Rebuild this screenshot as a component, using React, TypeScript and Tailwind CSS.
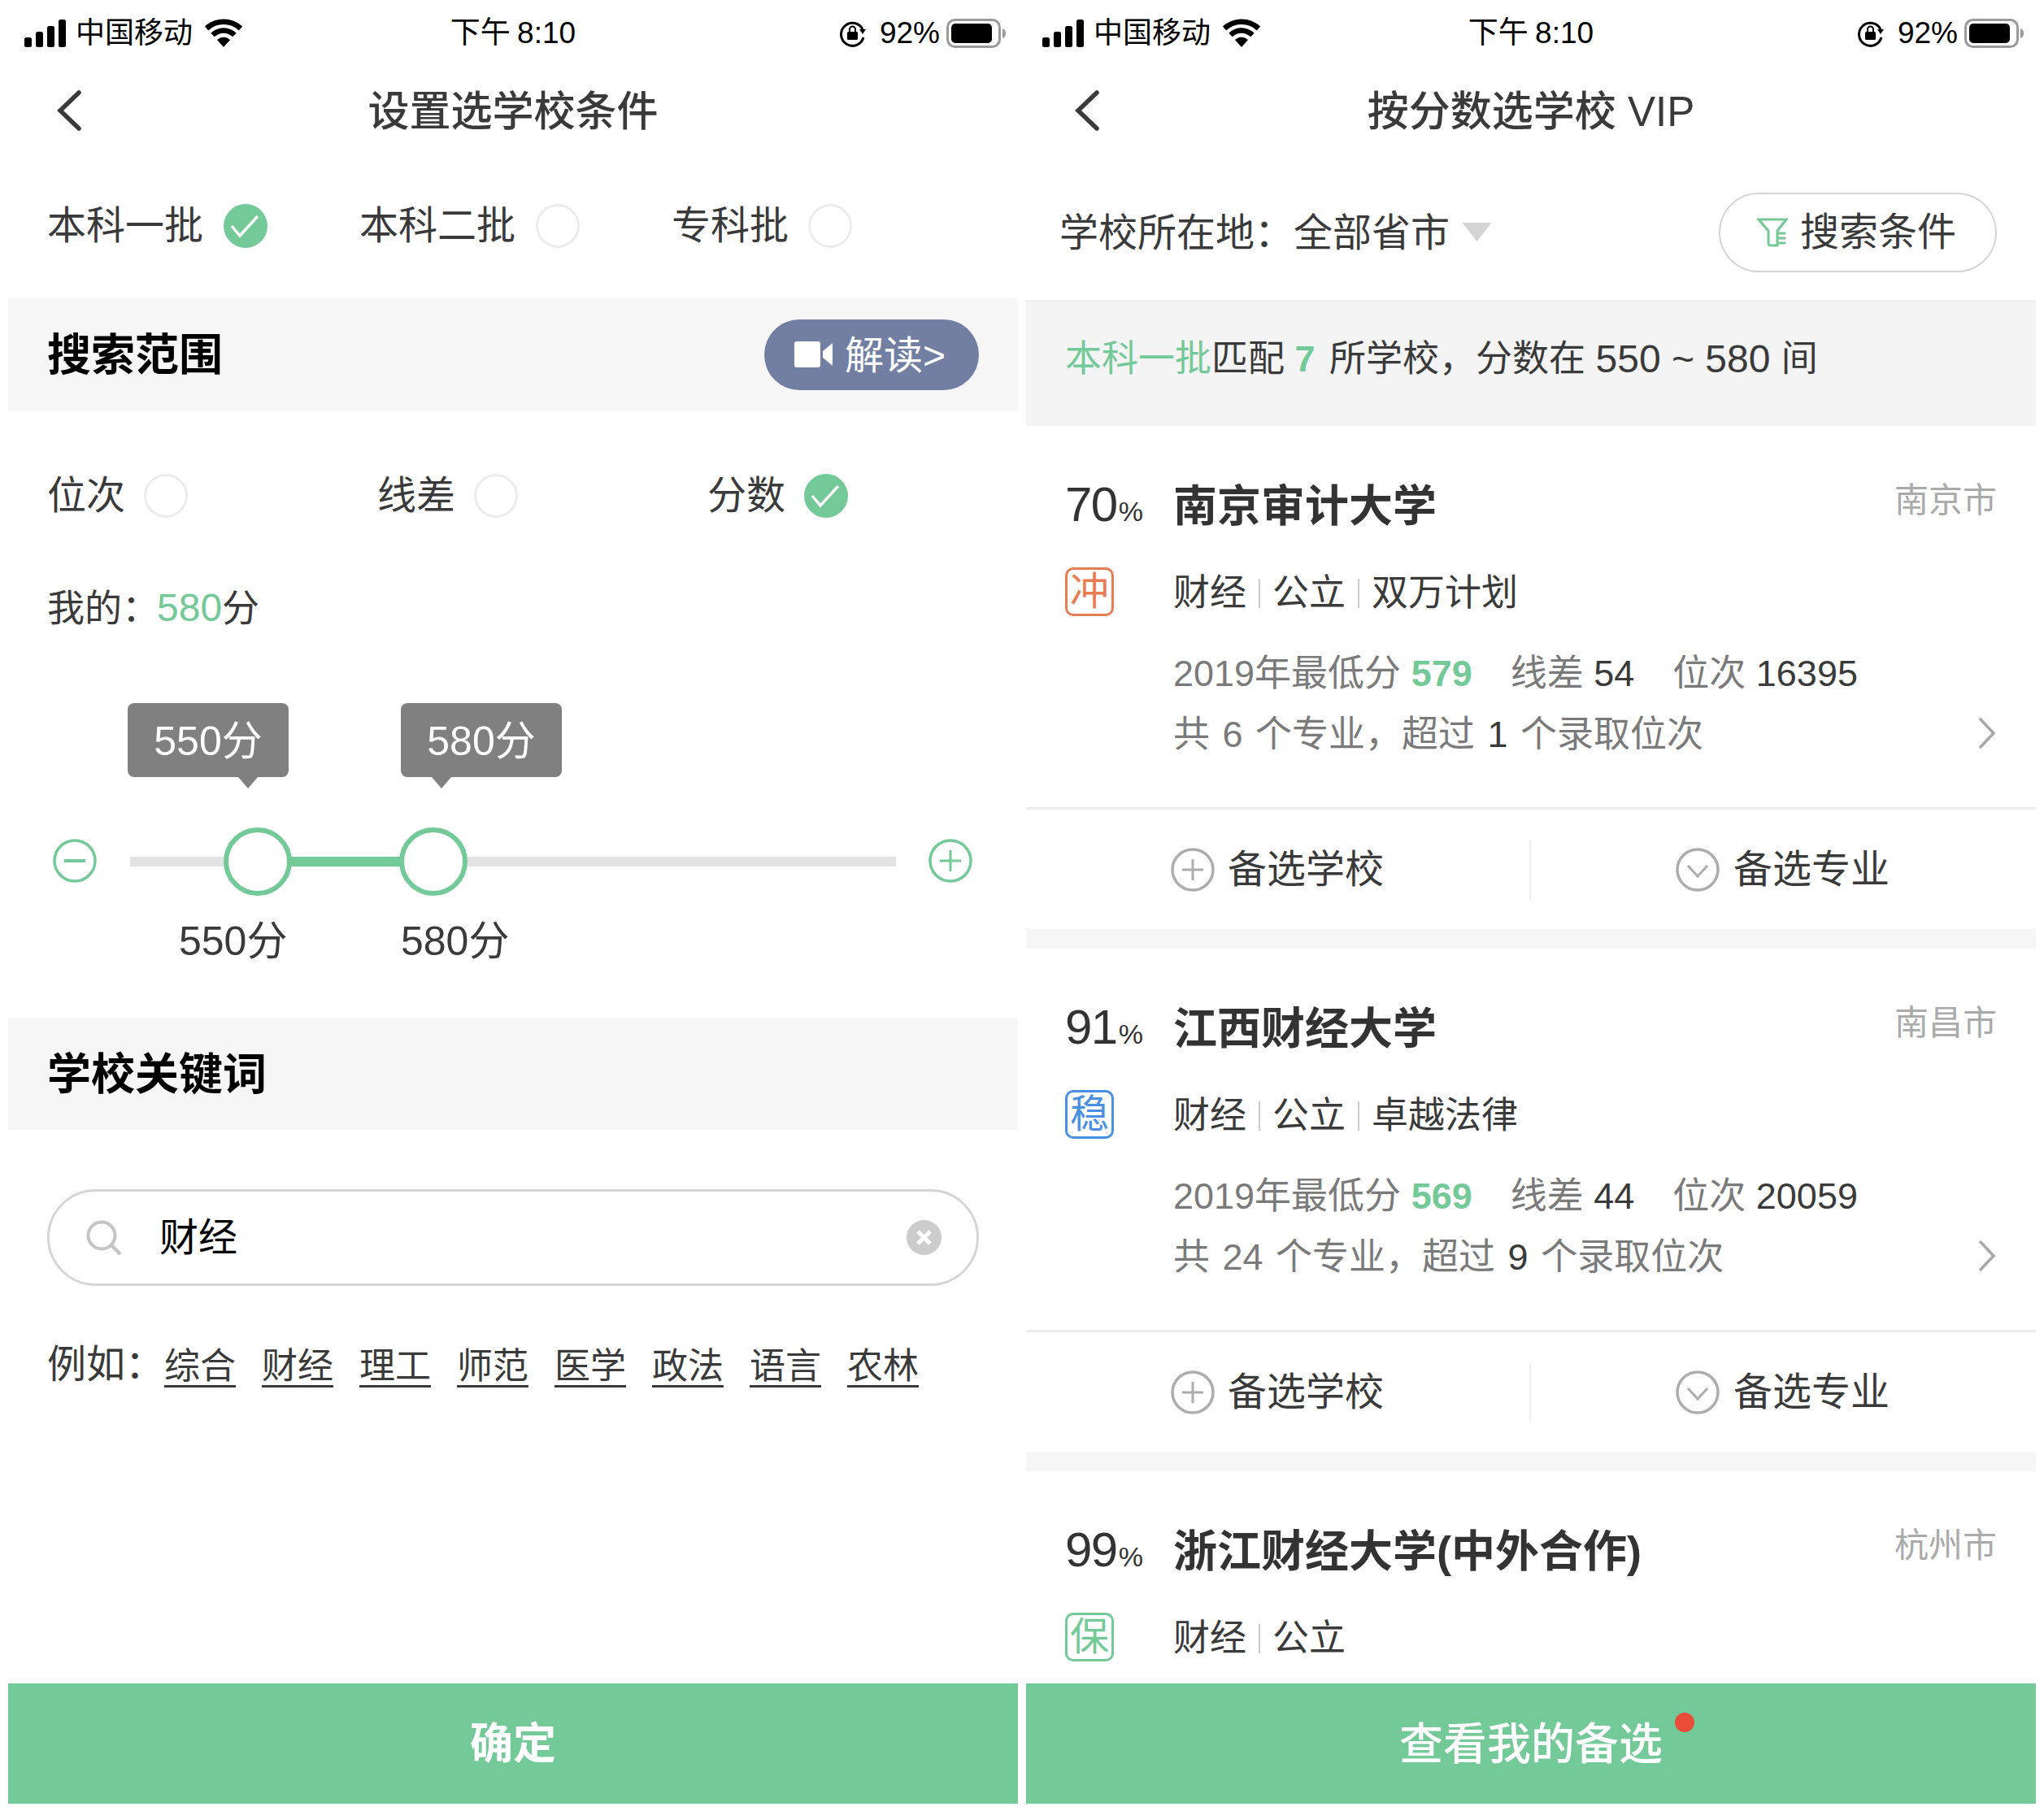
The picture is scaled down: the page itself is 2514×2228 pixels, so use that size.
const CheckMark = ({ on }: { on: boolean }) =>
  on ? (
    <svg width="54" height="54" viewBox="0 0 54 54" className="shrink-0">
      <circle cx="27" cy="27" r="27" fill="#74c998" />
      <path d="M10 27l10 12L42 15" fill="none" stroke="#fff" strokeWidth="3.5" />
    </svg>
  ) : (
    <div className="w-[54px] h-[54px] rounded-full border-[3px] border-[#ececec] shrink-0" />
  );

const StatusBar = () => (
  <div className="h-[80px] pt-[1px] grid grid-cols-[1fr_auto_1fr] items-center text-black text-[36px] leading-none">
    <div className="flex items-center pl-[20px]">
      <svg width="52" height="34" viewBox="0 0 52 34">
        <rect x="0" y="22" width="9" height="12" rx="2.5" fill="#000" />
        <rect x="14" y="15" width="9" height="19" rx="2.5" fill="#000" />
        <rect x="28" y="8" width="9" height="26" rx="2.5" fill="#000" />
        <rect x="42" y="0" width="9" height="34" rx="2.5" fill="#000" />
      </svg>
      <span className="ml-[11px]">中国移动</span>
      <svg width="48" height="36" viewBox="0 0 48 36" className="ml-[14px]">
        <path d="M3 12C15 1 33 1 45 12" fill="none" stroke="#000" strokeWidth="6.5" />
        <path d="M10.5 20C18.5 12.5 29.5 12.5 37.5 20" fill="none" stroke="#000" strokeWidth="6.5" />
        <path d="M16 26C21 21.5 27 21.5 32 26L24 35Z" fill="#000" />
      </svg>
    </div>
    <div className="text-[37px] [word-spacing:-2px]">下午 8:10</div>
    <div className="flex items-center justify-end pr-[14px]">
      <svg width="34" height="34" viewBox="0 0 34 34">
        <path d="M29 12A14 14 0 1 0 30 22" fill="none" stroke="#000" strokeWidth="3" />
        <path d="M25 12h8l-4 6Z" fill="#000" />
        <rect x="10" y="15" width="13" height="10" rx="1.5" fill="#000" />
        <path d="M13 15v-3a3.5 3.5 0 0 1 7 0v3" fill="none" stroke="#000" strokeWidth="2" />
      </svg>
      <span className="ml-[16px] text-[37px]">92%</span>
      <svg width="74" height="36" viewBox="0 0 74 36" className="ml-[8px]">
        <rect x="1.5" y="1.5" width="64" height="33" rx="9" fill="none" stroke="#9a9a9a" strokeWidth="3" />
        <rect x="6" y="6" width="50" height="24" rx="5" fill="#000" />
        <path d="M69 12c3 1 4 3 4 6s-1 5-4 6Z" fill="#9a9a9a" />
      </svg>
    </div>
  </div>
);

const NavBar = ({ title }: { title: string }) => (
  <div className="h-[112px] grid grid-cols-[1fr_auto_1fr] items-center">
    <svg width="32" height="50" viewBox="0 0 32 50" className="ml-[59px]">
      <path d="M28 3L5 25l23 22" fill="none" stroke="#3a3a3a" strokeWidth="5.5" strokeLinecap="round" />
    </svg>
    <div className="pt-[3px] text-[51px] leading-none font-medium text-[#3a3a3a]">{title}</div>
    <div />
  </div>
);

const SectionBand = ({ children }: { children: React.ReactNode }) => (
  <div className="h-[138px] bg-[#f6f6f6] flex items-center justify-between pl-[48px] pr-[48px]">{children}</div>
);

const CircleIcon = ({ color, size = 54, kind }: { color: string; size?: number; kind: "plus" | "minus" | "down" }) => (
  <svg width={size} height={size} viewBox="0 0 54 54" className="shrink-0">
    <circle cx="27" cy="27" r="25" fill="none" stroke={color} strokeWidth="3.5" />
    {kind !== "down" && <path d="M14 27h26" stroke={color} strokeWidth={kind === "minus" ? 4 : 3} />}
    {kind === "plus" && <path d="M27 14v26" stroke={color} strokeWidth="3" />}
    {kind === "down" && <path d="M15 22l12 13 12-13" fill="none" stroke={color} strokeWidth="3" />}
  </svg>
);

const SliderTip = ({ text, left, arrow }: { text: string; left: string; arrow: string }) => (
  <div className={`absolute top-0 ${left} w-[198px] h-[91px] pt-[4px] rounded-[8px] bg-[#808080] text-white text-[50px] flex items-center justify-center`}>
    {text}
    <div className={`absolute top-[91px] ${arrow} w-0 h-0 border-x-[12px] border-t-[14px] border-x-transparent border-t-[#808080]`} />
  </div>
);

const SettingsPanel = () => (
  <div className="w-[1242px] h-[2219px] bg-white flex flex-col">
    <StatusBar />
    <NavBar title="设置选学校条件" />
    <div className="h-[170px] mb-[5px] pt-[2px] pl-[48px] flex items-center text-[48px] text-[#3a3a3a]">
      <div className="w-[384px] flex items-center gap-[25px]"><span>本科一批</span><CheckMark on /></div>
      <div className="w-[384px] flex items-center gap-[25px]"><span>本科二批</span><CheckMark on={false} /></div>
      <div className="flex items-center gap-[24px]"><span>专科批</span><CheckMark on={false} /></div>
    </div>
    <SectionBand>
      <span className="pt-[3px] text-[54px] font-bold text-black">搜索范围</span>
      <div className="w-[264px] h-[87px] rounded-[44px] bg-[#727fa2] flex items-center pl-[37px] text-white text-[48px]">
        <svg width="48" height="32" viewBox="0 0 48 32">
          <rect x="0" y="0" width="32" height="32" rx="3" fill="#fff" />
          <path d="M35 12L47 2V30L35 20Z" fill="#fff" />
        </svg>
        <span className="ml-[14px] pt-[3px]">解读&gt;</span>
      </div>
    </SectionBand>
    <div className="h-[210px] pl-[48px] flex items-center text-[48px] text-[#3a3a3a]">
      <div className="w-[406px] flex items-center gap-[23px]"><span>位次</span><CheckMark on={false} /></div>
      <div className="w-[406px] flex items-center gap-[23px]"><span>线差</span><CheckMark on={false} /></div>
      <div className="flex items-center gap-[23px]"><span>分数</span><CheckMark on /></div>
    </div>
    <div className="mt-[3px] h-[60px] pl-[48px] flex items-center text-[46px] text-[#3a3a3a]">
      <span>我的：</span><span className="-ml-[3px] text-[48px] text-[#74c998]">580</span><span>分</span>
    </div>
    {/* slider: tips and handles sit on the track */}
    <div className="relative mt-[87px] h-[387px]">
      <SliderTip text="550分" left="left-[147px]" arrow="left-[136px]" />
      <SliderTip text="580分" left="left-[483px]" arrow="left-[38px]" />
      <div className="absolute left-[55px] top-[167px]"><CircleIcon color="#74c998" kind="minus" /></div>
      <div className="absolute left-[1132px] top-[167px]"><CircleIcon color="#74c998" kind="plus" /></div>
      <div className="absolute left-[150px] top-[189px] w-[942px] h-[12px] bg-[#e3e3e3]" />
      <div className="absolute left-[345px] top-[189px] w-[140px] h-[12px] bg-[#74c998]" />
      <div className="absolute left-[265px] top-[153px] w-[84px] h-[84px] rounded-full bg-white border-[6px] border-[#74c998]" />
      <div className="absolute left-[481px] top-[153px] w-[84px] h-[84px] rounded-full bg-white border-[6px] border-[#74c998]" />
      <div className="absolute left-[210px] top-[263px] text-[50px] leading-[60px] text-[#3a3a3a]">550分</div>
      <div className="absolute left-[483px] top-[263px] text-[50px] leading-[60px] text-[#3a3a3a]">580分</div>
    </div>
    <SectionBand>
      <span className="pt-[3px] text-[54px] font-bold text-black">学校关键词</span>
    </SectionBand>
    <div className="mt-[73px] ml-[48px] w-[1146px] h-[119px] rounded-full border-[3px] border-[#d5d5d5] flex items-center pl-[45px] pr-[43px]">
      <svg width="44" height="44" viewBox="0 0 44 44" className="shrink-0">
        <circle cx="19" cy="19" r="16.5" fill="none" stroke="#c4c4c4" strokeWidth="4" />
        <path d="M31 31l11 11" stroke="#c4c4c4" strokeWidth="4.5" />
      </svg>
      <span className="ml-[46px] text-[48px] text-black">财经</span>
      <svg width="43" height="43" viewBox="0 0 43 43" className="ml-auto shrink-0">
        <circle cx="21.5" cy="21.5" r="21.5" fill="#cccccc" />
        <path d="M14 14l15 15M29 14L14 29" stroke="#fff" strokeWidth="5" />
      </svg>
    </div>
    <div className="mt-[61px] pl-[48px] flex items-center text-[#3a3a3a]">
      <span className="shrink-0 whitespace-nowrap mb-[3px] text-[48px] w-[144px]">例如：</span>
      <div className="flex gap-[32px] text-[44px]">
        {["综合", "财经", "理工", "师范", "医学", "政法", "语言", "农林"].map((w) => (
          <span key={w} className="underline underline-offset-[8px] decoration-[3px]">{w}</span>
        ))}
      </div>
    </div>
    <div className="mt-auto h-[148px] pt-[2px] shrink-0 bg-[#74c998] flex items-center justify-center text-white text-[53px] font-bold">确定</div>
  </div>
);

type School = {
  score: string;
  name: string;
  city: string;
  tag: string;
  tagClass: string;
  tags: string[];
  stats?: { low: string; diff: string; rank: string; majors: string; over: string };
};

const schools: School[] = [
  {
    score: "70", name: "南京审计大学", city: "南京市", tag: "冲", tagClass: "text-[#e87c53] border-[#e87c53]",
    tags: ["财经", "公立", "双万计划"],
    stats: { low: "579", diff: "54", rank: "16395", majors: "6", over: "1" },
  },
  {
    score: "91", name: "江西财经大学", city: "南昌市", tag: "稳", tagClass: "text-[#4a90e2] border-[#4a90e2]",
    tags: ["财经", "公立", "卓越法律"],
    stats: { low: "569", diff: "44", rank: "20059", majors: "24", over: "9" },
  },
  {
    score: "99", name: "浙江财经大学(中外合作)", city: "杭州市", tag: "保", tagClass: "text-[#74c998] border-[#74c998]",
    tags: ["财经", "公立"],
  },
];

const SchoolCard = ({ s }: { s: School }) => (
  <div>
    <div className="pt-[69px]">
      <div className="h-[60px] pl-[48px] pr-[48px] flex items-center">
        <div className="w-[133px] mb-[4px] text-[#333] text-[60px] leading-none tracking-tight">
          {s.score}
          <span className="ml-[2px] text-[34px] tracking-normal">%</span>
        </div>
        <div className="text-[54px] font-bold text-[#333]">{s.name}</div>
        <div className="ml-auto mb-[16px] text-[42px] text-[#aaaaaa]">{s.city}</div>
      </div>
      <div className="mt-[45px] h-[60px] pl-[48px] flex items-center">
        <div className={`w-[60px] h-[60px] rounded-[10px] border-[3px] flex items-center justify-center text-[48px] leading-none ${s.tagClass}`}>
          {s.tag}
        </div>
        <div className="ml-[73px] pt-[3px] flex items-center text-[45px] text-[#3a3a3a]">
          {s.tags.map((t, i) => (
            <span key={t} className="flex items-center">
              {i > 0 && <span className="w-[2px] h-[36px] bg-[#cccccc] mx-[15px]" />}
              {t}
            </span>
          ))}
        </div>
      </div>
      {s.stats && (
        <>
          <div className="mt-[46px] h-[50px] pl-[181px] flex items-center text-[45px] text-[#7a7a7a] whitespace-pre">
            <span>2019年最低分 </span>
            <span className="font-bold text-[#74c998]">{s.stats.low}</span>
            <span className="ml-[47px]">线差 </span>
            <span className="text-[#3a3a3a]">{s.stats.diff}</span>
            <span className="ml-[47px]">位次 </span>
            <span className="text-[#3a3a3a]">{s.stats.rank}</span>
          </div>
          <div className="mt-[25px] h-[50px] pl-[181px] pr-[48px] flex items-center text-[45px] text-[#7a7a7a] whitespace-pre [word-spacing:3px]">
            <span>共 {s.stats.majors} 个专业，超过 </span>
            <span className="text-[#3a3a3a]">{s.stats.over}</span>
            <span> 个录取位次</span>
            <svg width="24" height="42" viewBox="0 0 24 42" className="ml-auto mb-[5px]">
              <path d="M3 3l17 18L3 39" fill="none" stroke="#a8a8a8" strokeWidth="3.5" />
            </svg>
          </div>
          <div className="mt-[64px] h-[3px] bg-[#eeeeee]" />
          <div className="h-[147px] grid grid-cols-[621px_1fr] items-center text-[48px] text-[#3a3a3a]">
            <div className="h-[72px] pl-[178px] flex items-center gap-[16px] border-r-[2px] border-[#eeeeee]">
              <CircleIcon color="#adadad" kind="plus" />
              <span>备选学校</span>
            </div>
            <div className="pl-[178px] flex items-center gap-[17px]">
              <CircleIcon color="#adadad" kind="down" />
              <span>备选专业</span>
            </div>
          </div>
        </>
      )}
    </div>
    {s.stats && <div className="h-[24px] bg-[#f6f6f6]" />}
  </div>
);

const ResultPanel = () => (
  <div className="w-[1242px] h-[2219px] bg-white flex flex-col overflow-hidden">
    <StatusBar />
    <NavBar title="按分数选学校 VIP" />
    <div className="h-[177px] pt-[11px] pl-[41px] pr-[48px] flex items-center text-[48px] text-[#3a3a3a]">
      <span className="pt-[2px]">学校所在地：全部省市</span>
      <svg width="37" height="24" viewBox="0 0 36 24" className="ml-[15px] mb-[2px]">
        <path d="M0 1h36L18 24Z" fill="#d4d4d4" />
      </svg>
      <div className="ml-auto w-[342px] h-[98px] rounded-[49px] border-[2px] border-[#d5d5d5] flex items-center pl-[45px]">
        <svg width="38" height="36" viewBox="0 0 38 36" className="shrink-0">
          <path d="M2 2H36L25 16V34H17C15 34 14 33 14 31V16Z" fill="none" stroke="#74c998" strokeWidth="3" />
          <path d="M26 19h9M26 25h9M26 31h9" stroke="#74c998" strokeWidth="3" />
        </svg>
        <span className="ml-[15px]">搜索条件</span>
      </div>
    </div>
    <div className="h-[155px] bg-[#f4f4f4] border-t-[2px] border-[#eeeeee] pl-[48px] pb-[12px] flex items-center text-[45px] text-[#3a3a3a] whitespace-pre">
      <span className="text-[#74c998]">本科一批</span>
      <span>匹配 </span>
      <span className="font-bold text-[#74c998]">7</span>
      <span className="ml-[5px]"> 所学校，分数在 </span>
      <span className="text-[48px]">550 ~ 580 </span>
      <span>间</span>
    </div>
    <div className="flex-1 min-h-0 overflow-hidden">
      {schools.map((s) => (
        <SchoolCard key={s.name} s={s} />
      ))}
    </div>
    <div className="relative h-[148px] pt-[2px] shrink-0 bg-[#74c998] flex items-center justify-center text-white text-[54px] font-medium">
      查看我的备选
      <div className="absolute left-[798px] top-[36px] w-[24px] h-[24px] rounded-full bg-[#ea4c3a]" />
    </div>
  </div>
);

export default function App() {
  return (
    <div className="w-[2514px] h-[2228px] bg-white flex gap-[10px] px-[10px] [font-family:'Liberation_Sans','Noto_Sans_CJK_SC',sans-serif]">
      <SettingsPanel />
      <ResultPanel />
    </div>
  );
}
